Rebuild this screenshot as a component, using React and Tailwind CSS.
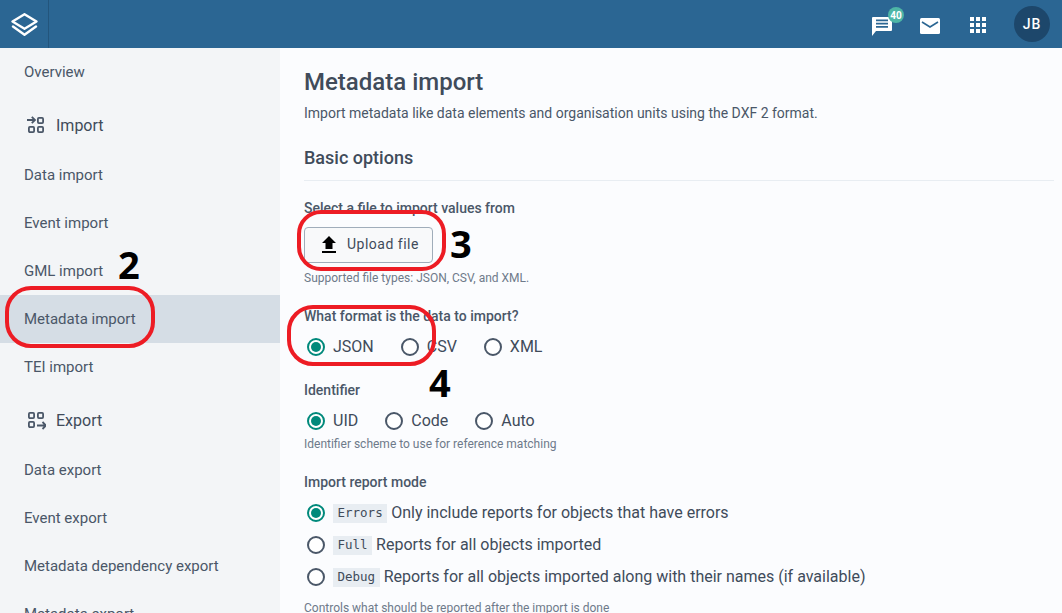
import React from 'react';

const font = { fontFamily: 'Roboto, sans-serif' };

const Logo = () => (
  <svg width="27" height="23" viewBox="0 0 27 23" fill="none" stroke="white" strokeWidth="2.4" strokeLinejoin="round" strokeLinecap="round">
    <path d="M13.5 1.2 L25.5 8.5 L13.5 15.8 L1.5 8.5 Z" />
    <path d="M2 13.5 L13.5 21.8 L25 13.5" />
  </svg>
);

const ImportIcon = () => (
  <svg width="20" height="20" viewBox="0 0 20 20" fill="none" stroke="#4a5768" strokeWidth="1.8">
    <path d="M1 4 H9 M5.8 0.8 L9 4 L5.8 7.2" />
    <rect x="11.9" y="1.9" width="5.2" height="5.2" rx="1" />
    <rect x="2.9" y="10.9" width="5.2" height="5.2" rx="1" />
    <rect x="11.9" y="10.9" width="5.2" height="5.2" rx="1" />
  </svg>
);

const ExportIcon = () => (
  <svg width="20" height="20" viewBox="0 0 20 20" fill="none" stroke="#4a5768" strokeWidth="1.8">
    <rect x="2.9" y="1.9" width="5.2" height="5.2" rx="1" />
    <rect x="11.9" y="1.9" width="5.2" height="5.2" rx="1" />
    <rect x="2.9" y="10.9" width="5.2" height="5.2" rx="1" />
    <path d="M11 14.5 H20 M16.5 11 L20 14.5 L16.5 18" />
  </svg>
);

const NavItem = ({ label, active }) => (
  <div className={`h-12 flex items-center pl-6 text-[15px] text-[#4a5768] ${active ? 'bg-[#d5dde5]' : ''}`}>{label}</div>
);

const NavHeading = ({ icon, label }) => (
  <div className="h-[55px] pt-[5px] flex items-center pl-[26px] gap-[10px] text-[16px] text-[#404b5a]">
    {icon}
    <span>{label}</span>
  </div>
);

const Radio = ({ checked }) => (
  <span className={`w-[18px] h-[18px] rounded-full border-2 shrink-0 flex items-center justify-center bg-white ${checked ? 'border-[#00897b]' : 'border-[#4a5768]'}`}>
    {checked && <span className="w-[10px] h-[10px] rounded-full bg-[#00897b]" />}
  </span>
);

const RadioOption = ({ label, checked }) => (
  <label className="flex items-center gap-[8px] text-[16px] text-[#404b5a]">
    <Radio checked={checked} />
    {label}
  </label>
);

const Code = ({ children }) => (
  <code className="bg-[#e8edf2] px-[4.5px] h-[19px] flex items-center text-[12.5px] text-[#404b5a] mr-[4px]" style={{ fontFamily: '"DejaVu Sans Mono", monospace' }}>{children}</code>
);

const ReportOption = ({ code, text, checked }) => (
  <div className="h-8 flex items-center text-[16px] text-[#404b5a]">
    <Radio checked={checked} />
    <span className="w-[8px]" />
    <Code>{code}</Code>
    {text}
  </div>
);

const Label = ({ className = '', children }) => (
  <div className={`text-[14px] font-medium text-[#4a5768] leading-[18px] ${className}`}>{children}</div>
);

const Help = ({ className = '', children }) => (
  <div className={`text-[12px] text-[#6e7a8a] leading-[16px] ${className}`}>{children}</div>
);

const App = () => (
  <div className="relative h-screen overflow-hidden flex flex-col bg-[#fbfcfe]" style={font}>
    <header className="h-12 shrink-0 bg-[#2b6693] flex items-center">
      <div className="w-[49px] h-12 flex items-center justify-center border-r border-[#23557c]">
        <Logo />
      </div>
      <div className="ml-auto flex items-center pr-[12px]">
        <div className="relative w-6 h-6 mr-[24px]">
          <svg width="24" height="24" viewBox="0 0 24 24" fill="white">
            <path d="M2 6 a1 1 0 0 1 1-1 H21 a1 1 0 0 1 1 1 V18 a1 1 0 0 1-1 1 H6 L2 24 Z" />
            <path d="M6 7.5 H18 V9.2 H6 Z M6 10.8 H18 V12.5 H6 Z M6 14 H18 V15.7 H6 Z" fill="#2b6693" />
          </svg>
          <span className="absolute left-[18px] top-[-5px] w-4 h-4 rounded-full bg-[#4db6a6] text-white text-[10px] font-bold flex items-center justify-center">40</span>
        </div>
        <svg className="mr-[24px]" width="24" height="24" viewBox="0 0 24 24" fill="white">
          <path d="M3.5 6 H20.5 A1.5 1.5 0 0 1 22 7.5 V20.5 A1.5 1.5 0 0 1 20.5 22 H3.5 A1.5 1.5 0 0 1 2 20.5 V7.5 A1.5 1.5 0 0 1 3.5 6 Z" />
          <path d="M4 10 L12 15 L20 10" fill="none" stroke="#2b6693" strokeWidth="1.6" />
        </svg>
        <svg className="mr-[24px]" width="24" height="24" viewBox="0 0 24 24" fill="white">
          <path d="M4 5h4v4H4z M10 5h4v4h-4z M16 5h4v4h-4z M4 11h4v4H4z M10 11h4v4h-4z M16 11h4v4h-4z M4 17h4v4H4z M10 17h4v4h-4z M16 17h4v4h-4z" />
        </svg>
        <div className="w-9 h-9 rounded-full bg-[#1d476b] text-white text-[14px] font-medium tracking-[1px] flex items-center justify-center">JB</div>
      </div>
    </header>

    <div className="flex flex-1 min-h-0">
      <aside className="w-[280px] shrink-0 bg-[#f3f5f7]">
        <NavItem label="Overview" />
        <NavHeading icon={<ImportIcon />} label="Import" />
        <NavItem label="Data import" />
        <NavItem label="Event import" />
        <NavItem label="GML import" />
        <NavItem label="Metadata import" active />
        <NavItem label="TEI import" />
        <NavHeading icon={<ExportIcon />} label="Export" />
        <NavItem label="Data export" />
        <NavItem label="Event export" />
        <NavItem label="Metadata dependency export" />
        <NavItem label="Metadata export" />
      </aside>

      <main className="flex-1 min-w-0 pl-6 pr-[8px] pt-[20px]">
        <h1 className="text-[24px] leading-[28px] font-medium text-[#404b5a]">Metadata import</h1>
        <p className="mt-[7px] text-[14px] leading-[20px] text-[#4a5768]">Import metadata like data elements and organisation units using the DXF 2 format.</p>
        <h2 className="mt-[23px] pb-[10px] text-[18px] leading-[24px] font-medium text-[#404b5a] border-b border-[#e8edf2]">Basic options</h2>

        <Label className="mt-[18px]">Select a file to import values from</Label>
        <button className="mt-[10px] w-[129px] h-9 flex items-center pl-[17px] gap-[11px] rounded-[4px] border border-[#a0adba] bg-[#f8f9fa] text-[14px] leading-[18px] tracking-[0.5px] text-[#404b5a]">
          <svg width="14" height="18" viewBox="0 0 14 18" fill="black">
            <path d="M7 0 L14 7 H10.5 V13 H3.5 V7 H0 Z M0 15 H14 V17 H0 Z" />
          </svg>
          <span className="relative bottom-[1px]">Upload file</span>
        </button>
        <Help className="mt-[7px]">Supported file types: JSON, CSV, and XML.</Help>

        <Label className="mt-[21px]">What format is the data to import?</Label>
        <div className="mt-[10px] h-6 flex items-center gap-[27px] pl-[3px]">
          <RadioOption label="JSON" checked />
          <RadioOption label="CSV" />
          <RadioOption label="XML" />
        </div>

        <Label className="mt-[22px]">Identifier</Label>
        <div className="mt-[10px] h-6 flex items-center gap-[27px] pl-[3px]">
          <RadioOption label="UID" checked />
          <RadioOption label="Code" />
          <RadioOption label="Auto" />
        </div>
        <Help className="mt-[3px]">Identifier scheme to use for reference matching</Help>

        <Label className="mt-[21px]">Import report mode</Label>
        <div className="mt-[6px] pl-[3px]">
          <ReportOption code="Errors" text="Only include reports for objects that have errors" checked />
          <ReportOption code="Full" text="Reports for all objects imported" />
          <ReportOption code="Debug" text="Reports for all objects imported along with their names (if available)" />
        </div>
        <Help className="mt-[7px]">Controls what should be reported after the import is done</Help>
      </main>
    </div>

    {/* red annotations drawn over the screenshot */}
    <div className="absolute left-[5px] top-[286px] w-[150px] h-[62px] rounded-[26px] border-[4px] border-[#ed1c24]" />
    <div className="absolute left-[297px] top-[210px] w-[149px] h-[61px] rounded-[24px] border-[4px] border-[#ed1c24]" />
    <div className="absolute left-[287px] top-[305px] w-[149px] h-[61px] rounded-[26px] border-[4px] border-[#ed1c24]" />
    <span className="absolute left-[118px] top-[240px] text-[38px] leading-[48px] font-bold text-black" style={{ fontFamily: '"Open Sans", sans-serif' }}>2</span>
    <span className="absolute left-[450px] top-[219px] text-[38px] leading-[48px] font-bold text-black" style={{ fontFamily: '"Open Sans", sans-serif' }}>3</span>
    <span className="absolute left-[429px] top-[358px] text-[38px] leading-[48px] font-bold text-black" style={{ fontFamily: '"Open Sans", sans-serif' }}>4</span>
  </div>
);

export default App;
